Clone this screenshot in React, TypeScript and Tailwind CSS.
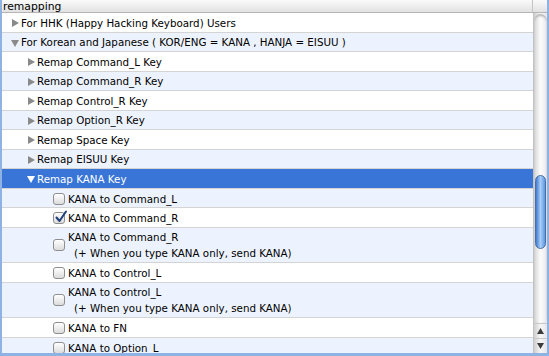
import React from "react";

type Row = {
  level: 0 | 1 | 2;
  kind: "closed" | "open" | "check";
  label: string;
  sub?: string;
  checked?: boolean;
  selected?: boolean;
};

const rows: Row[] = [
  { level: 0, kind: "closed", label: "For HHK (Happy Hacking Keyboard) Users" },
  { level: 0, kind: "open", label: "For Korean and Japanese ( KOR/ENG = KANA , HANJA = EISUU )" },
  { level: 1, kind: "closed", label: "Remap Command_L Key" },
  { level: 1, kind: "closed", label: "Remap Command_R Key" },
  { level: 1, kind: "closed", label: "Remap Control_R Key" },
  { level: 1, kind: "closed", label: "Remap Option_R Key" },
  { level: 1, kind: "closed", label: "Remap Space Key" },
  { level: 1, kind: "closed", label: "Remap EISUU Key" },
  { level: 1, kind: "open", label: "Remap KANA Key", selected: true },
  { level: 2, kind: "check", label: "KANA to Command_L" },
  { level: 2, kind: "check", label: "KANA to Command_R", checked: true },
  { level: 2, kind: "check", label: "KANA to Command_R", sub: "(+ When you type KANA only, send KANA)" },
  { level: 2, kind: "check", label: "KANA to Control_L" },
  { level: 2, kind: "check", label: "KANA to Control_L", sub: "(+ When you type KANA only, send KANA)" },
  { level: 2, kind: "check", label: "KANA to FN" },
  { level: 2, kind: "check", label: "KANA to Option_L" },
];

const indent = ["pl-[9px]", "pl-[25px]", "pl-[51px]"];

const Triangle = ({ open, white }: { open: boolean; white?: boolean }) => (
  <svg width="9" height="10" viewBox="0 0 9 10" className="shrink-0">
    {open ? (
      <polygon points="0,2 8,2 4,9" fill={white ? "#ffffff" : "#8a8a8a"} />
    ) : (
      <polygon points="1,1 8,5 1,9" fill="#8a8a8a" />
    )}
  </svg>
);

const Checkbox = ({ checked }: { checked?: boolean }) => (
  <span className="relative shrink-0 w-[12px] h-[12px] rounded-[3px] border border-[#8e8e8e] bg-gradient-to-b from-white to-[#dcdcdc] shadow-[inset_0_1px_0_#fff]">
    {checked && (
      <svg width="14" height="14" viewBox="0 0 14 14" className="absolute -top-[3px] left-[0px]">
        <path d="M2.5 7.5 L5.5 11 L12 1.5" stroke="#1f3f7a" strokeWidth="2" fill="none" strokeLinecap="round" strokeLinejoin="round" />
      </svg>
    )}
  </span>
);

const App = () => {
  return (
    <div
      className="w-[549px] h-[356px] overflow-hidden flex flex-col bg-white border-l-2 border-r-2 border-b-[3px] border-[#8fb2e4] text-[10.3px] text-black"
      style={{ fontFamily: '"DejaVu Sans", sans-serif' }}
    >
      {/* header */}
      <div className="flex h-[13px] shrink-0 bg-gradient-to-b from-[#fafafa] to-[#e2e2e2] border-b border-[#b5b5b5]">
        <div className="flex-1 pl-[1px] leading-[13px] text-[10.8px] border-r border-[#c5c5c5]">remapping</div>
        <div className="w-[14px]" />
      </div>
      <div className="flex flex-1 min-h-0">
        {/* outline rows */}
        <div className="flex-1 flex flex-col overflow-hidden">
          {rows.map((r, i) => {
            const alt = i % 2 === 1;
            const bg = r.selected ? "bg-[#3875d7] text-white" : alt ? "bg-[#edf3fe]" : "bg-white";
            const h = r.sub ? "h-[35.5px] pt-[1px]" : "h-[19.5px] pt-[2px]";
            return (
              <div
                key={i}
                className={`shrink-0 flex items-center border-b border-[#d4d4d4] ${h} ${bg} ${indent[r.level]}`}
              >
                {r.kind === "check" ? (
                  <>
                    <Checkbox checked={r.checked} />
                    <div className="ml-[3px] leading-[16px]">
                      <div>{r.label}</div>
                      {r.sub && <div className="pl-[6px]">{r.sub}</div>}
                    </div>
                  </>
                ) : (
                  <>
                    <Triangle open={r.kind === "open"} white={r.selected} />
                    <span className="ml-[1px]">{r.label}</span>
                  </>
                )}
              </div>
            );
          })}
        </div>
        {/* scrollbar */}
        <div className="w-[14px] shrink-0 flex flex-col bg-gradient-to-r from-[#cfcfcf] via-[#f6f6f6] to-[#e6e6e6] border-l border-[#c2c2c2]">
          <div className="flex-1 relative rounded-b-[7px] rounded-t-[7px] mt-[1px] bg-gradient-to-r from-[#d6d6d6] via-[#fbfbfb] to-[#e9e9e9] shadow-[inset_0_2px_2px_#b8b8b8]">
            <div className="absolute left-[1px] right-[1px] top-[161px] h-[74px] rounded-full border border-[#4a6fa8] bg-gradient-to-r from-[#3f7ad0] via-[#a9cdf6] to-[#5d97e2]" />
          </div>
          <div className="h-[15px] flex items-center justify-center border-t border-[#c8c8c8]">
            <svg width="7" height="6" viewBox="0 0 7 6"><polygon points="3.5,0 7,6 0,6" fill="#3c3c3c" /></svg>
          </div>
          <div className="h-[15px] flex items-center justify-center border-t border-[#c8c8c8]">
            <svg width="7" height="6" viewBox="0 0 7 6"><polygon points="0,0 7,0 3.5,6" fill="#3c3c3c" /></svg>
          </div>
        </div>
      </div>
    </div>
  );
};

export default App;
